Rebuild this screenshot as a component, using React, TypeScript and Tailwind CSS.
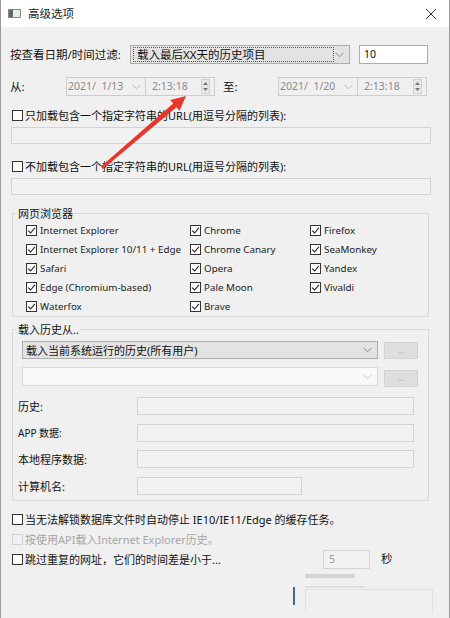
import React from "react";

const FONT = { fontFamily: '"Noto Sans", "Noto Sans CJK SC", sans-serif' };

function Check({ checked = false, disabled = false }: { checked?: boolean; disabled?: boolean }) {
  return (
    <div
      className={
        "w-[11px] h-[11px] shrink-0 border flex items-center justify-center " +
        (disabled ? "border-[#cfcfcf] bg-[#f0f0f0]" : "border-[#333333] bg-white")
      }
    >
      {checked && (
        <svg width="9" height="9" viewBox="0 0 9 9">
          <path d="M1.2 4.6 L3.6 7 L7.9 1.8" fill="none" stroke="#222" strokeWidth="1.1" />
        </svg>
      )}
    </div>
  );
}

function Chevron({ color = "#777" }: { color?: string }) {
  return (
    <svg width="9" height="6" viewBox="0 0 9 6">
      <path d="M0.5 0.8 L4.5 4.8 L8.5 0.8" fill="none" stroke={color} strokeWidth="1" />
    </svg>
  );
}

function Spinner() {
  return (
    <div className="w-[9px] h-[15px] border border-[#d0d0d0] bg-[#e8e8e8] flex flex-col items-center justify-center gap-[3px]">
      <svg width="5" height="3" viewBox="0 0 5 3">
        <path d="M0 3 L2.5 0 L5 3 Z" fill="#777" />
      </svg>
      <svg width="5" height="3" viewBox="0 0 5 3">
        <path d="M0 0 L2.5 3 L5 0 Z" fill="#777" />
      </svg>
    </div>
  );
}

function DateTime({ date, time }: { date: string; time: string }) {
  return (
    <div className="flex h-[19px] w-[149px] border border-[#cdcdcd] bg-[#f0f0f0] text-[10.5px] text-[#8a8a8a]">
      <div className="w-[79px] flex items-center pl-[1px] pr-[4px] border-r border-[#cdcdcd]">
        <span className="flex-1 whitespace-pre">{date}</span>
        <Chevron color="#b5b5b5" />
      </div>
      <div className="flex-1 flex items-center pl-[6px] pr-[4px]">
        <span className="flex-1">{time}</span>
        <Spinner />
      </div>
    </div>
  );
}

function TextBox({ className = "" }: { className?: string }) {
  return <div className={"border border-[#d3d3d3] bg-[#f2f2f2] " + className} />;
}

function DotsButton() {
  return (
    <div className="w-[34px] h-[17px] border border-[#d2d2d2] bg-[#dedede] flex items-center justify-center text-[9px] text-[#a8a8a8] leading-none pb-[2px]">
      ...
    </div>
  );
}

const browsers: string[][] = [
  ["Internet Explorer", "Chrome", "Firefox"],
  ["Internet Explorer 10/11 + Edge", "Chrome Canary", "SeaMonkey"],
  ["Safari", "Opera", "Yandex"],
  ["Edge (Chromium-based)", "Pale Moon", "Vivaldi"],
  ["Waterfox", "Brave", ""],
];

export default function App() {
  return (
    <div
      className="relative w-[450px] h-[618px] overflow-hidden bg-[#f0f0f0] border-l border-r border-[#9a9a9a] text-[11px] text-[#111] leading-none"
      style={FONT}
    >
      {/* Title bar */}
      <div className="h-[27px] bg-white flex items-center pl-[7px] pr-[12px]">
        <div className="w-[13px] h-[9px] border border-[#8a8a8a] bg-[#e8ece8] flex">
          <div className="w-[4px] h-full bg-[#5a6b66]" />
        </div>
        <span className="ml-[7px] text-[11.5px] text-[#222]">高级选项</span>
        <div className="flex-1" />
        <svg width="12" height="12" viewBox="0 0 12 12">
          <path d="M1 1 L11 11 M11 1 L1 11" stroke="#333" strokeWidth="1" />
        </svg>
      </div>

      <div className="pl-[9px]">
        {/* Row 1 */}
        <div className="mt-[18px] h-[19px] flex items-center">
          <span className="w-[120px] text-[11.5px]">按查看日期/时间过滤:</span>
          <div className="w-[220px] h-[19px] border border-[#adadad] bg-[#e3e3e3] flex items-center pl-[2px] pr-[5px]">
            <div className="w-[201px] h-[15px] border border-dotted border-[#555] flex items-center pl-[3px] text-[11.5px]">
              载入最后XX天的历史项目
            </div>
            <div className="flex-1" />
            <Chevron color="#888" />
          </div>
          <div className="ml-[9px] w-[69px] h-[19px] border border-[#adadad] bg-white flex items-center pl-[4px] text-[10.5px]">
            10
          </div>
        </div>

        {/* Row 2 */}
        <div className="mt-[13px] h-[19px] flex items-center">
          <span className="w-[56px] text-[11.5px]">从:</span>
          <DateTime date="2021/  1/13" time="2:13:18" />
          <span className="ml-[8px] w-[55px] text-[11.5px]">至:</span>
          <DateTime date="2021/  1/20" time="2:13:18" />
        </div>

        {/* URL filters */}
        <div className="mt-[12px] h-[14px] flex items-center pl-[2px]">
          <Check />
          <span className="ml-[2px] text-[11px]">只加载包含一个指定字符串的URL(用逗号分隔的列表):</span>
        </div>
        <TextBox className="mt-[5px] h-[17px] w-[420px] ml-[1px]" />
        <div className="mt-[15px] h-[14px] flex items-center pl-[2px]">
          <Check />
          <span className="ml-[2px] text-[11px]">不加载包含一个指定字符串的URL(用逗号分隔的列表):</span>
        </div>
        <TextBox className="mt-[5px] h-[17px] w-[420px] ml-[1px]" />

        {/* Browsers group */}
        <div className="relative mt-[18px] ml-[2px] w-[417px] border border-[#dadada] pt-[7px] pl-[13px]">
          <span className="absolute left-[4px] top-[-6px] bg-[#f0f0f0] px-[1px] text-[11px]">网页浏览器</span>
          {browsers.map((row, i) => (
            <div key={i} className="h-[19px] flex items-center">
              {row.map((b, j) => (
                <div
                  key={j}
                  className={"flex items-center " + (j === 0 ? "w-[164px]" : j === 1 ? "w-[120px]" : "flex-1")}
                >
                  {b && (
                    <>
                      <Check checked />
                      <span className="ml-[3px] whitespace-nowrap text-[9.8px] text-[#222]">{b}</span>
                    </>
                  )}
                </div>
              ))}
            </div>
          ))}
        </div>

        {/* Load history group */}
        <div className="relative mt-[12px] ml-[2px] w-[417px] border border-[#dadada] pt-[11px] pl-[9px] pb-[5px]">
          <span className="absolute left-[4px] top-[-6px] bg-[#f0f0f0] px-[1px] text-[11px]">载入历史从..</span>
          <div className="flex items-center h-[18px]">
            <div className="w-[356px] h-[18px] border border-[#adadad] bg-[#e3e3e3] flex items-center pl-[3px] pr-[5px]">
              <span className="flex-1 text-[11px]">载入当前系统运行的历史(所有用户)</span>
              <Chevron color="#888" />
            </div>
            <div className="ml-[6px]">
              <DotsButton />
            </div>
          </div>
          <div className="mt-[8px] flex items-center h-[19px]">
            <div className="w-[356px] h-[19px] border border-[#d9d9d9] bg-[#f9f9f9] flex items-center justify-end pr-[5px]">
              <Chevron color="#c8c8c8" />
            </div>
            <div className="ml-[6px] mt-[3px]">
              <DotsButton />
            </div>
          </div>
          {[
            ["历史:", "w-[277px]"],
            ["APP 数据:", "w-[277px]"],
            ["本地程序数据:", "w-[277px]"],
            ["计算机名:", "w-[165px]"],
          ].map(([label, w], i) => (
            <div key={i} className={"flex items-center h-[18px] " + (i === 0 ? "mt-[11px]" : i === 2 ? "mt-[8px]" : "mt-[9px]")}>
              <span className={"w-[119px] -ml-[4px] " + (i === 1 ? "text-[10px]" : "text-[11px]")}>
                {label}
              </span>
              <TextBox className={"h-[18px] " + w} />
            </div>
          ))}
        </div>

        {/* Bottom checkboxes */}
        <div className="mt-[11px] h-[14px] flex items-center pl-[2px]">
          <Check />
          <span className="ml-[2px] text-[11px]">当无法解锁数据库文件时自动停止 IE10/IE11/Edge 的缓存任务。</span>
        </div>
        <div className="mt-[6px] h-[14px] flex items-center pl-[2px]">
          <Check disabled />
          <span className="ml-[2px] text-[11px] text-[#a6a6a6]">按使用API载入Internet Explorer历史。</span>
        </div>
        <div className="mt-[3px] h-[20px] flex items-center pl-[2px]">
          <Check />
          <span className="ml-[2px] w-[298px] text-[11px]">跳过重复的网址，它们的时间差是小于...</span>
          <div className="w-[47px] h-[19px] border border-[#d3d3d3] bg-[#f2f2f2] flex items-center pl-[5px] text-[10.5px] text-[#9a9a9a]">
            5
          </div>
          <span className="ml-[11px] text-[11.5px]">秒</span>
        </div>

        {/* Bottom (partially visible buttons) */}
        <div className="mt-[5px] flex pl-[283px]">
          <div className="mt-[13px] w-[2px] h-[18px] bg-[#3f6f78]" />
          <div className="ml-[10px] w-[128px] flex flex-col">
            <div className="w-[50px] h-[4px] bg-[#d4d4d4]" />
            <div className="mt-[8px] w-[60px] h-[2px] bg-[#dedede]" />
            <div className="mt-[1px] h-[24px] border-l border-r border-t border-[#e2e2e2]" />
          </div>
        </div>
      </div>

      {/* Red arrow annotation */}
      <svg className="absolute left-0 top-0 pointer-events-none" width="450" height="618">
        <polygon
          points="101,168 100,166.5 172.2,103.5 169.3,100.1 185,96 178.5,110.7 175.4,107.2 102,169"
          fill="#e8362c"
        />
      </svg>
    </div>
  );
}
